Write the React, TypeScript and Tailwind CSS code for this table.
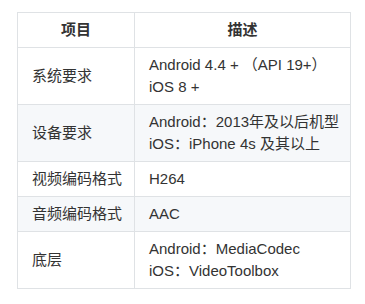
import React from "react";

const rows: { name: string; desc: string[] }[] = [
  { name: "系统要求", desc: ["Android 4.4 + （API 19+）", "iOS 8 +"] },
  { name: "设备要求", desc: ["Android：2013年及以后机型", "iOS：iPhone 4s 及其以上"] },
  { name: "视频编码格式", desc: ["H264"] },
  { name: "音频编码格式", desc: ["AAC"] },
  { name: "底层", desc: ["Android：MediaCodec", "iOS：VideoToolbox"] },
];

export default function App() {
  return (
    <div
      className="bg-white w-[365px] h-[304px] pt-[12px] pl-[17px] text-[15px] leading-[22px] text-[#333333]"
      style={{ fontFamily: '"Liberation Sans", "Noto Sans CJK SC", sans-serif' }}
    >
      <table className="border-collapse table-fixed w-[334px]">
        <colgroup>
          <col className="w-[117px]" />
          <col />
        </colgroup>
        <thead>
          <tr>
            <th className="border border-[#dfe2e5] px-[13px] py-[6px] font-bold text-center">项目</th>
            <th className="border border-[#dfe2e5] px-[13px] py-[6px] font-bold text-center">描述</th>
          </tr>
        </thead>
        <tbody>
          {rows.map((r, i) => (
            <tr key={r.name} className={i % 2 === 1 ? "bg-[#f6f8fa]" : "bg-white"}>
              <td className="border border-[#dfe2e5] px-[14px] py-[6px] whitespace-nowrap">{r.name}</td>
              <td className="border border-[#dfe2e5] px-[14px] py-[6px] whitespace-nowrap">
                {r.desc.map((d) => (
                  <div key={d}>{d}</div>
                ))}
              </td>
            </tr>
          ))}
        </tbody>
      </table>
    </div>
  );
}
